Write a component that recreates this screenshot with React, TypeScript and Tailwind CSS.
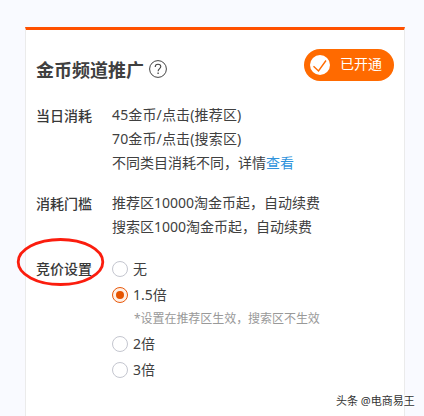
import type { ReactNode } from "react";

function Row({ label, className = "", children }: { label: string; className?: string; children: ReactNode }) {
  return (
    <div className={`flex text-[14px] leading-6 ${className}`}>
      <div className="w-[76px] shrink-0 pt-px font-medium text-[#383838]">{label}</div>
      <div className="whitespace-nowrap">{children}</div>
    </div>
  );
}

function Option({ text, checked = false }: { text: string; checked?: boolean }) {
  return (
    <label className="flex h-[26px] items-center gap-[5px]">
      <span
        className={`flex size-4 items-center justify-center rounded-full border ${
          checked ? "border-[#e8590c] bg-[#fff0e6]" : "border-[#c4c6cf] bg-white"
        }`}
      >
        {checked && <span className="size-2 rounded-full bg-[#e65400]" />}
      </span>
      <span>{text}</span>
    </label>
  );
}

export default function App() {
  return (
    <div className="relative h-[416px] w-[424px] overflow-hidden bg-[#f9faff] pl-[25px] pt-[27px] font-['Noto_Sans','Noto_Sans_CJK_SC',sans-serif] text-[#404040]">
      <div className="h-[389px] w-[380px] border-x border-t-[3px] border-x-[#ebebeb] border-t-[#ff5000] bg-white pl-[10px] pr-[10px] pt-[19px]">
        <div className="flex h-8 items-center">
          <h1 className="mt-[9px] whitespace-nowrap text-[18px] font-bold leading-6 text-[#404040]">金币频道推广</h1>
          <svg className="ml-[5px] mt-[8px] size-[18px]" viewBox="0 0 18 18" fill="none" stroke="#444" strokeWidth="1">
            <circle cx="9" cy="9" r="8.4" />
            <path d="M6.2 7C6.2 5.2 7.4 4.2 9 4.2s2.8 1 2.8 2.4c0 1.9-2.7 2.1-2.7 4.6" strokeWidth="1.1" />
            <path d="M9.1 12.6v1.4" strokeWidth="1.3" />
          </svg>
          <div className="ml-auto flex h-8 w-[90px] items-center rounded-full bg-[#ff6a00] pl-[6px]">
            <svg className="size-5" viewBox="0 0 20 20" fill="none">
              <circle cx="10" cy="10" r="10" fill="#fff" />
              <path d="M3.5 11.3l5 4.7L16 5.5" stroke="#ff6a00" strokeWidth="1.4" />
            </svg>
            <span className="-mt-[3px] ml-[10px] whitespace-nowrap text-[14px] leading-5 text-white">已开通</span>
          </div>
        </div>

        <Row label="当日消耗" className="mt-[22px]">
          <p className="tracking-[0.15px]">45金币/点击(推荐区)</p>
          <p className="tracking-[0.15px]">70金币/点击(搜索区)</p>
          <p>
            不同类目消耗不同，详情<a className="text-[#2f93dc]">查看</a>
          </p>
        </Row>

        <Row label="消耗门槛" className="mt-4">
          <p>推荐区10000淘金币起，自动续费</p>
          <p>搜索区1000淘金币起，自动续费</p>
        </Row>

        <Row label="竞价设置" className="mt-[17px]">
          <div className="flex flex-col">
            <Option text="无" />
            <Option text="1.5倍" checked />
            <p className="ml-[22px] h-[23px] text-[12px] leading-[22px] tracking-[-0.05px] text-[#999]">*设置在推荐区生效，搜索区不生效</p>
            <Option text="2倍" />
            <Option text="3倍" />
          </div>
        </Row>
      </div>

      <svg className="absolute left-[16px] top-[237px] h-[50px] w-[90px]" viewBox="0 0 90 50" fill="none">
        <ellipse cx="44.5" cy="25" rx="42.3" ry="22.5" stroke="#fb1d0e" strokeWidth="2.8" />
      </svg>
      <div className="absolute left-[336px] top-[393px] whitespace-nowrap text-[11px] leading-4 text-[#333] [text-shadow:1px_1px_0_#fff,-1px_-1px_0_#fff]">
        头条 @电商易王
      </div>
    </div>
  );
}
